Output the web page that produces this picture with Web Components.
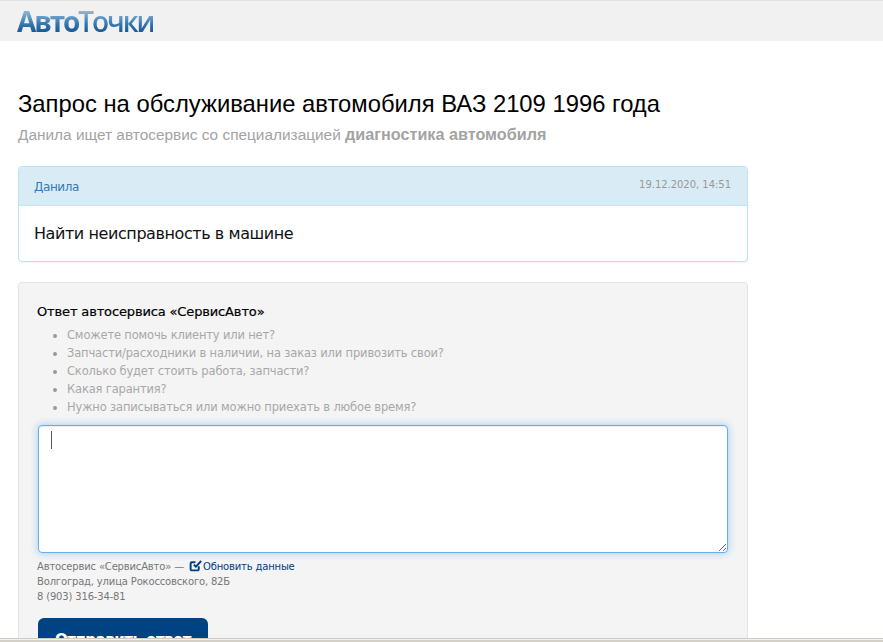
<!DOCTYPE html>
<html lang="ru">
<head>
<meta charset="utf-8">
<title>АвтоТочки</title>
<style>
  html, body { margin: 0; padding: 0; height: 642px; overflow: hidden; background: #fff; }
  body { font-family: "Liberation Sans", Arial, sans-serif; }
</style>
</head>
<body>
<site-header></site-header>
<request-page>
  <span slot="title">Запрос на обслуживание автомобиля ВАЗ 2109 1996 года</span>
  <span slot="subtitle">Данила ищет автосервис со специализацией <b style="font-size:16.2px">диагностика автомобиля</b></span>
  <request-card name="Данила" date="19.12.2020, 14:51">Найти неисправность в машине</request-card>
  <answer-form></answer-form>
</request-page>
<window-edge></window-edge>

<script>
class SiteHeader extends HTMLElement {
  connectedCallback() {
    const shadow = this.attachShadow({ mode: 'open' });
    shadow.innerHTML = `
      <style>
        :host {
          display: block;
          height: 40px;
          background: #f1f1f1;
          border-top: 1px solid #e2e2e2;
          padding-left: 17px;
        }
        .logo {
          display: inline-block;
          font-family: "Open Sans", sans-serif;
          font-size: 28px;
          font-weight: 600;
          line-height: 40px;
          letter-spacing: -2.1px;
          background: linear-gradient(#8db8dc 25%, #2f72ac 60%, #1a5a94 78%);
          -webkit-background-clip: text;
          background-clip: text;
          color: transparent;
        }
        b { font-weight: 700; }
      </style>
      <span class="logo"><b>Авто</b>Точки</span>
    `;
  }
}

class RequestPage extends HTMLElement {
  connectedCallback() {
    const shadow = this.attachShadow({ mode: 'open' });
    shadow.innerHTML = `
      <style>
        :host {
          display: block;
          width: 730px;
          margin-left: 18px;
          padding-top: 49px;
        }
        h1 {
          margin: 0;
          font: 400 23.8px/28px "Liberation Sans", Arial, sans-serif;
          color: #000;
        }
        p {
          margin: 6px 0 21px;
          font: 400 15.4px/20px "Liberation Sans", Arial, sans-serif;
          color: #a3a3a3;
        }
        .stack { display: flex; flex-direction: column; gap: 20px; }
      </style>
      <h1><slot name="title"></slot></h1>
      <p><slot name="subtitle"></slot></p>
      <div class="stack"><slot></slot></div>
    `;
  }
}

class RequestCard extends HTMLElement {
  connectedCallback() {
    const shadow = this.attachShadow({ mode: 'open' });
    shadow.innerHTML = `
      <style>
        :host {
          display: block;
          border: 1px solid #bce4f1;
          border-radius: 4px;
          box-shadow: 0 1px 1px rgba(0, 0, 0, .05);
          overflow: hidden;
          background: #fff;
        }
        .head {
          display: flex;
          justify-content: space-between;
          align-items: center;
          height: 38px;
          padding: 0 16px 0 15px;
          background: #d9ebf5;
          border-bottom: 1px solid #bce8f1;
          font: 11px "DejaVu Sans", sans-serif;
        }
        .name { color: #337ab7; font-size: 12px; letter-spacing: -.4px; margin-top: 1px; }
        .date { color: #999; font-size: 10px; margin-top: -3px; letter-spacing: -.03px; }
        .body {
          padding: 16px 15px 15px;
          font: 16px/24px "DejaVu Sans", sans-serif;
          letter-spacing: -.42px;
          color: #111;
        }
      </style>
      <div class="head">
        <span class="name">${this.getAttribute('name')}</span>
        <span class="date">${this.getAttribute('date')}</span>
      </div>
      <div class="body"><slot></slot></div>
    `;
  }
}

class AnswerForm extends HTMLElement {
  connectedCallback() {
    const shadow = this.attachShadow({ mode: 'open' });
    // Подсказки для автосервиса
    const hints = [
      'Сможете помочь клиенту или нет?',
      'Запчасти/расходники в наличии, на заказ или привозить свои?',
      'Сколько будет стоить работа, запчасти?',
      'Какая гарантия?',
      'Нужно записываться или можно приехать в любое время?'
    ];
    shadow.innerHTML = `
      <style>
        :host {
          display: block;
          background: #f4f4f4;
          border: 1px solid #e3e3e3;
          border-radius: 4px;
          padding: 19px;
          font: 11px/18px "DejaVu Sans", sans-serif;
        }
        .title { color: #000; font-size: 13px; -webkit-text-stroke: .2px #000; margin: 1px 0 5px -1px; letter-spacing: -.14px; }
        ul { margin: 0 0 9px; padding: 0 0 0 29px; color: #a8a8a8; font-size: 11.5px; letter-spacing: -.16px; }
        li::marker { color: #999; }
        .field { position: relative; margin-bottom: 6px; }
        .box {
          display: block;
          box-sizing: border-box;
          width: 100%;
          height: 128px;
          padding: 6px 12px;
          margin: 0;
          border: 1px solid #66afe9;
          border-radius: 4px;
          background: #fff;
          outline: 0;
          box-shadow: inset 0 1px 1px rgba(0,0,0,.075), 0 0 8px rgba(102,175,233,.6);
          font: 14px/20px "DejaVu Sans", sans-serif;
        }
        .caret {
          position: absolute;
          left: 13px;
          top: 6px;
          width: 1px;
          height: 18px;
          background: #555;
        }
        .meta { font-size: 10px; line-height: 15px; color: #777; letter-spacing: -.17px; margin-left: -1px; }
        a { color: #004080; text-decoration: none; }
        svg { width: 13px; height: 13px; vertical-align: -2px; margin: 0 -2px 0 2px; }
        .send {
          display: block;
          box-sizing: border-box;
          width: 170px;
          height: 44px;
          margin-top: 14px;
          padding: 0;
          border: 0;
          border-radius: 6px;
          background: #004385;
          color: #fff;
          font: 700 15px/22px "DejaVu Sans", sans-serif;
          letter-spacing: -.5px;
        }
      </style>
      <div class="title">Ответ автосервиса «СервисАвто»</div>
      <ul>${hints.map(h => `<li>${h}</li>`).join('')}</ul>
      <div class="field">
        <textarea class="box"></textarea>
        <span class="caret"></span>
      </div>
      <div class="meta">
        Автосервис «СервисАвто» —
        <a href="#"><svg viewBox="0 0 16 16" fill="none" stroke="#004080" stroke-width="2.4"><path d="M12 9v3.500A1.500 1.500 0 0 1 10.500 14h-7A1.500 1.500 0 0 1 2 12.500v-7A1.500 1.500 0 0 1 3.500 4H8"/><path d="M6 7l2.500 2.500L15 2.500"/></svg> Обновить данные</a><br>
        Волгоград, улица Рокоссовского, 82Б<br>
        8 (903) 316-34-81
      </div>
      <button class="send">Отправить ответ</button>
    `;
  }
}

class WindowEdge extends HTMLElement {
  connectedCallback() {
    const shadow = this.attachShadow({ mode: 'open' });
    shadow.innerHTML = `
      <style>
        :host {
          position: fixed;
          left: 0; right: 0; bottom: 0;
          height: 4px;
          background: #d4d0c8;
          border-top: 1px solid #cfcbc3;
          box-sizing: border-box;
        }
        div { height: 1px; background: #f3f1ec; }
      </style>
      <div></div>
    `;
  }
}

customElements.define('site-header', SiteHeader);
customElements.define('request-page', RequestPage);
customElements.define('request-card', RequestCard);
customElements.define('answer-form', AnswerForm);
customElements.define('window-edge', WindowEdge);
</script>
</body>
</html>
